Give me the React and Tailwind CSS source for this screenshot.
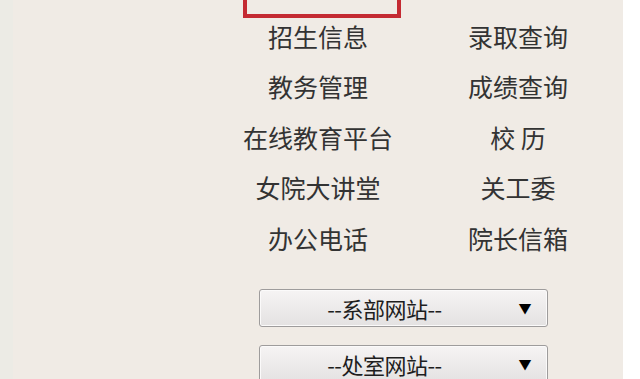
import React from "react";

const rows = [
  ["招生信息", "录取查询"],
  ["教务管理", "成绩查询"],
  ["在线教育平台", "校 历"],
  ["女院大讲堂", "关工委"],
  ["办公电话", "院长信箱"],
];

function Select({ label }) {
  return (
    <div className="flex h-[38px] w-[289px] shrink-0 items-center rounded-[3px] border border-[#9e9c9c] bg-gradient-to-b from-[#f6f4f4] to-[#e4e2e2] shadow-[inset_0_0_0_1px_#fbfafa]">
      <div className="flex-1 pl-[2px] text-center text-[22px] leading-none tracking-[-0.5px] text-[#1e1e1e]">{label}</div>
      <div className="w-[40px] pr-[4px] text-center text-[13px] leading-none text-black">▼</div>
    </div>
  );
}

export default function App() {
  return (
    <div
      className="flex h-[379px] w-[640px] overflow-hidden bg-white"
      style={{ fontFamily: '"Noto Sans CJK SC", "Noto Sans", sans-serif' }}
    >
      <div className="w-[13px] shrink-0 bg-[#ecebe5]" />
      <div className="flex w-[610px] shrink-0 flex-col overflow-hidden bg-[#f0ebe5]">
        <div className="ml-[230px] h-[18px] w-[158px] shrink-0 border-x-[4px] border-b-[4px] border-[#c42a32]" />
        <div className="-mt-[7px] ml-[205px] grid w-[400px] shrink-0 grid-cols-2">
          {rows.map(([a, b], i) => (
            <React.Fragment key={i}>
              <div className="flex h-[50.6px] items-center justify-center text-[25px] text-[#333]">{a}</div>
              <div className="flex h-[50.6px] items-center justify-center text-[25px] text-[#333]">{b}</div>
            </React.Fragment>
          ))}
        </div>
        <div className="ml-[246px] mt-[25px] flex shrink-0 flex-col gap-[18px]">
          <Select label="--系部网站--" />
          <Select label="--处室网站--" />
        </div>
      </div>
      <div className="w-[17px] shrink-0 bg-white" />
    </div>
  );
}
